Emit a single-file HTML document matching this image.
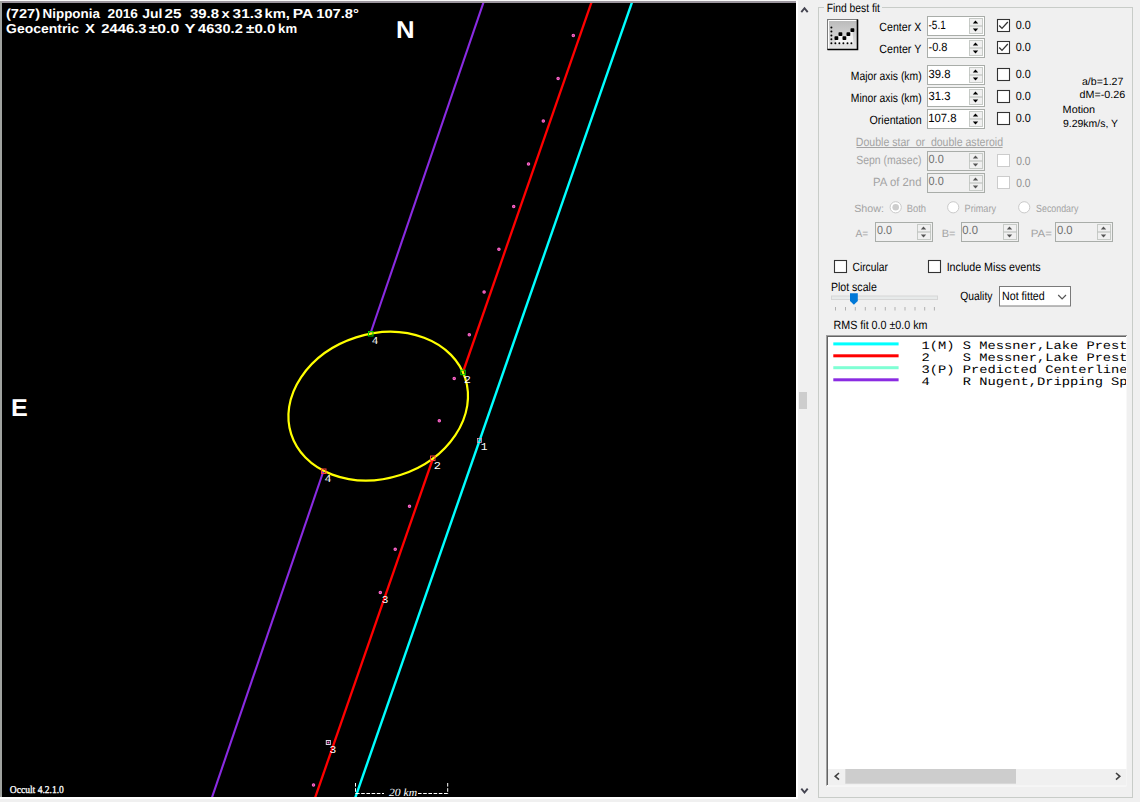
<!DOCTYPE html><html><head><meta charset="utf-8"><style>html,body{margin:0;padding:0}body{width:1140px;height:802px;overflow:hidden;background:#f0f0f0}svg{position:absolute;left:0;top:0;display:block}text{white-space:pre}</style></head><body>
<svg width="1140" height="802" viewBox="0 0 1140 802" text-rendering="geometricPrecision">
<rect x="0" y="0" width="1140" height="802" fill="#f0f0f0"/>
<rect x="0" y="0" width="798" height="1" fill="#f8f8f8"/>
<rect x="0" y="1" width="797" height="2" fill="#9c969e"/>
<rect x="0" y="1" width="2" height="796" fill="#a0a3a0"/>
<rect x="796" y="1" width="2" height="798" fill="#ffffff"/>
<rect x="0" y="797" width="798" height="2" fill="#ffffff"/>
<rect x="2" y="3" width="794" height="794" fill="#000"/>
<defs><clipPath id="cc"><rect x="2" y="3" width="794" height="794"/></clipPath><clipPath id="lc"><rect x="828" y="337" width="298" height="432"/></clipPath><linearGradient id="bg1" x1="0" y1="0" x2="0" y2="1"><stop offset="0" stop-color="#b9b9b9"/><stop offset="1" stop-color="#e6e6e6"/></linearGradient></defs>
<g clip-path="url(#cc)">
<g fill="none">
<line x1="484.32" y1="0" x2="370.26" y2="334" stroke="#8a2be2" stroke-width="2.1"/>
<line x1="323.65" y1="470.5" x2="211.8" y2="798" stroke="#8a2be2" stroke-width="2.1"/>
<line x1="592.3" y1="0" x2="463.1" y2="371.75" stroke="#ff0000" stroke-width="2.3"/>
<line x1="433.2" y1="457.75" x2="315" y2="798" stroke="#ff0000" stroke-width="2.3"/>
<line x1="632.8" y1="0" x2="355.2" y2="798" stroke="#00ffff" stroke-width="2.4"/>
<ellipse cx="378.2" cy="406.2" rx="91.4" ry="72.3" transform="rotate(-17.8 378.2 406.2)" stroke="#ffff00" stroke-width="2.2"/>
<circle cx="573.3" cy="35.5" r="1.2" fill="#b0408f" stroke="#ff66cc" stroke-width="1.1"/>
<circle cx="558.1" cy="78.4" r="1.2" fill="#b0408f" stroke="#ff66cc" stroke-width="1.1"/>
<circle cx="543.3" cy="121.1" r="1.2" fill="#b0408f" stroke="#ff66cc" stroke-width="1.1"/>
<circle cx="528.5" cy="163.9" r="1.2" fill="#b0408f" stroke="#ff66cc" stroke-width="1.1"/>
<circle cx="513.7" cy="206.6" r="1.2" fill="#b0408f" stroke="#ff66cc" stroke-width="1.1"/>
<circle cx="498.9" cy="249.3" r="1.2" fill="#b0408f" stroke="#ff66cc" stroke-width="1.1"/>
<circle cx="484.1" cy="292.1" r="1.2" fill="#b0408f" stroke="#ff66cc" stroke-width="1.1"/>
<circle cx="469.3" cy="334.8" r="1.2" fill="#b0408f" stroke="#ff66cc" stroke-width="1.1"/>
<circle cx="454.2" cy="378.4" r="1.2" fill="#b0408f" stroke="#ff66cc" stroke-width="1.1"/>
<circle cx="439.3" cy="420.8" r="1.2" fill="#b0408f" stroke="#ff66cc" stroke-width="1.1"/>
<circle cx="409.5" cy="506.3" r="1.2" fill="#b0408f" stroke="#ff66cc" stroke-width="1.1"/>
<circle cx="395.2" cy="549.3" r="1.2" fill="#b0408f" stroke="#ff66cc" stroke-width="1.1"/>
<circle cx="380.3" cy="592.4" r="1.2" fill="#b0408f" stroke="#ff66cc" stroke-width="1.1"/>
<circle cx="313.5" cy="785" r="1.2" fill="#b0408f" stroke="#ff66cc" stroke-width="1.1"/>
<rect x="326.3" y="740.5" width="4" height="4" stroke="#d8d8e8" stroke-width="1"/>
<circle cx="328.3" cy="742.5" r="1" fill="#ff66cc"/>
<rect x="368.5" y="331.5" width="4.5" height="4.5" stroke="#00cc00" stroke-width="1"/>
<rect x="460.8" y="370.2" width="4.5" height="4.5" stroke="#00cc00" stroke-width="1"/>
<rect x="430.5" y="456" width="4.5" height="4.5" stroke="#ff4040" stroke-width="1"/>
<rect x="321.5" y="469" width="4.5" height="4.5" stroke="#ff4040" stroke-width="1"/>
<rect x="477.5" y="438.5" width="4" height="4" stroke="#e0a0c0" stroke-width="0.8"/>
</g>
<g stroke="#fff" stroke-width="1" fill="none" stroke-dasharray="3.6 1.6">
<line x1="356" y1="793.5" x2="384" y2="793.5"/><line x1="418" y1="793.5" x2="447.7" y2="793.5"/>
<line x1="355.5" y1="783" x2="355.5" y2="794"/><line x1="447.7" y1="783" x2="447.7" y2="794"/>
</g>
</g>
<text x="5.97" y="17.50" font-family='"Liberation Sans",sans-serif' font-size="13" font-weight="bold" font-style="normal" fill="#ffffff" textLength="34.05" lengthAdjust="spacingAndGlyphs" >(727)</text>
<text x="42.63" y="17.50" font-family='"Liberation Sans",sans-serif' font-size="13" font-weight="bold" font-style="normal" fill="#ffffff" textLength="57.27" lengthAdjust="spacingAndGlyphs" >Nipponia</text>
<text x="107.52" y="17.50" font-family='"Liberation Sans",sans-serif' font-size="13" font-weight="bold" font-style="normal" fill="#ffffff" textLength="30.45" lengthAdjust="spacingAndGlyphs" >2016</text>
<text x="142.19" y="17.50" font-family='"Liberation Sans",sans-serif' font-size="13" font-weight="bold" font-style="normal" fill="#ffffff" textLength="20.19" lengthAdjust="spacingAndGlyphs" >Jul</text>
<text x="164.57" y="17.50" font-family='"Liberation Sans",sans-serif' font-size="13" font-weight="bold" font-style="normal" fill="#ffffff" textLength="16.95" lengthAdjust="spacingAndGlyphs" >25</text>
<text x="189.93" y="17.50" font-family='"Liberation Sans",sans-serif' font-size="13" font-weight="bold" font-style="normal" fill="#ffffff" textLength="29.04" lengthAdjust="spacingAndGlyphs" >39.8</text>
<text x="221.45" y="17.50" font-family='"Liberation Sans",sans-serif' font-size="13" font-weight="bold" font-style="normal" fill="#ffffff" textLength="8.24" lengthAdjust="spacingAndGlyphs" >x</text>
<text x="232.62" y="17.50" font-family='"Liberation Sans",sans-serif' font-size="13" font-weight="bold" font-style="normal" fill="#ffffff" textLength="29.84" lengthAdjust="spacingAndGlyphs" >31.3</text>
<text x="264.47" y="17.50" font-family='"Liberation Sans",sans-serif' font-size="13" font-weight="bold" font-style="normal" fill="#ffffff" textLength="25.44" lengthAdjust="spacingAndGlyphs" >km,</text>
<text x="292.79" y="17.50" font-family='"Liberation Sans",sans-serif' font-size="13" font-weight="bold" font-style="normal" fill="#ffffff" textLength="20.40" lengthAdjust="spacingAndGlyphs" >PA</text>
<text x="316.22" y="17.50" font-family='"Liberation Sans",sans-serif' font-size="13" font-weight="bold" font-style="normal" fill="#ffffff" textLength="42.71" lengthAdjust="spacingAndGlyphs" >107.8°</text>
<text x="6.14" y="33.30" font-family='"Liberation Sans",sans-serif' font-size="13" font-weight="bold" font-style="normal" fill="#ffffff" textLength="72.87" lengthAdjust="spacingAndGlyphs" >Geocentric</text>
<text x="84.95" y="33.30" font-family='"Liberation Sans",sans-serif' font-size="13" font-weight="bold" font-style="normal" fill="#ffffff" textLength="9.93" lengthAdjust="spacingAndGlyphs" >X</text>
<text x="101.28" y="33.30" font-family='"Liberation Sans",sans-serif' font-size="13" font-weight="bold" font-style="normal" fill="#ffffff" textLength="45.22" lengthAdjust="spacingAndGlyphs" >2446.3</text>
<text x="148.71" y="33.30" font-family='"Liberation Sans",sans-serif' font-size="13" font-weight="bold" font-style="normal" fill="#ffffff" textLength="30.51" lengthAdjust="spacingAndGlyphs" >±0.0</text>
<text x="184.47" y="33.30" font-family='"Liberation Sans",sans-serif' font-size="13" font-weight="bold" font-style="normal" fill="#ffffff" textLength="11.01" lengthAdjust="spacingAndGlyphs" >Y</text>
<text x="198.08" y="33.30" font-family='"Liberation Sans",sans-serif' font-size="13" font-weight="bold" font-style="normal" fill="#ffffff" textLength="44.68" lengthAdjust="spacingAndGlyphs" >4630.2</text>
<text x="246.12" y="33.30" font-family='"Liberation Sans",sans-serif' font-size="13" font-weight="bold" font-style="normal" fill="#ffffff" textLength="29.27" lengthAdjust="spacingAndGlyphs" >±0.0</text>
<text x="278.08" y="33.30" font-family='"Liberation Sans",sans-serif' font-size="13" font-weight="bold" font-style="normal" fill="#ffffff" textLength="19.01" lengthAdjust="spacingAndGlyphs" >km</text>
<text x="396.03" y="37.90" font-family='"Liberation Sans",sans-serif' font-size="24.5" font-weight="bold" font-style="normal" fill="#ffffff" textLength="18.61" lengthAdjust="spacingAndGlyphs" >N</text>
<text x="11.07" y="416.00" font-family='"Liberation Sans",sans-serif' font-size="24.5" font-weight="bold" font-style="normal" fill="#ffffff" textLength="16.76" lengthAdjust="spacingAndGlyphs" >E</text>
<text x="9.82" y="792.90" font-family='"Liberation Serif",serif' font-size="10.5" font-weight="normal" font-style="normal" fill="#ffffff" textLength="54.07" lengthAdjust="spacingAndGlyphs" stroke="#fff" stroke-width="0.3">Occult 4.2.1.0</text>
<text x="389.00" y="795.80" font-family='"Liberation Serif",serif' font-size="11" font-weight="normal" font-style="italic" fill="#ffffff" textLength="28.08" lengthAdjust="spacingAndGlyphs" >20 km</text>
<text x="371.65" y="344.00" font-family='"Liberation Mono",monospace' font-size="10.5" font-weight="normal" font-style="normal" fill="#ffffff" textLength="6.60" lengthAdjust="spacingAndGlyphs" >4</text>
<text x="463.66" y="383.00" font-family='"Liberation Mono",monospace' font-size="10.5" font-weight="normal" font-style="normal" fill="#ffffff" textLength="7.17" lengthAdjust="spacingAndGlyphs" >2</text>
<text x="433.76" y="469.00" font-family='"Liberation Mono",monospace' font-size="10.5" font-weight="normal" font-style="normal" fill="#ffffff" textLength="7.17" lengthAdjust="spacingAndGlyphs" >2</text>
<text x="324.62" y="482.00" font-family='"Liberation Mono",monospace' font-size="10.5" font-weight="normal" font-style="normal" fill="#ffffff" textLength="6.96" lengthAdjust="spacingAndGlyphs" >4</text>
<text x="480.81" y="449.90" font-family='"Liberation Mono",monospace' font-size="10.5" font-weight="normal" font-style="normal" fill="#ffffff" textLength="6.75" lengthAdjust="spacingAndGlyphs" >1</text>
<text x="381.68" y="602.80" font-family='"Liberation Mono",monospace' font-size="10.5" font-weight="normal" font-style="normal" fill="#ffffff" textLength="6.64" lengthAdjust="spacingAndGlyphs" >3</text>
<text x="329.57" y="752.80" font-family='"Liberation Mono",monospace' font-size="10.5" font-weight="normal" font-style="normal" fill="#ffffff" textLength="6.77" lengthAdjust="spacingAndGlyphs" >3</text>
<path d="M801.3 12.2 L804.5 8.2 L807.7 12.2" fill="none" stroke="#444450" stroke-width="1.9"/>
<path d="M801.3 788.6 L804.5 792.6 L807.7 788.6" fill="none" stroke="#444450" stroke-width="1.9"/>
<rect x="799" y="392" width="8" height="17" fill="#cdcdcd"/>
<rect x="818.5" y="7.5" width="314" height="790" fill="none" stroke="#c8ccc8"/>
<rect x="824" y="2" width="58" height="10" fill="#f0f0f0"/>
<text x="826.67" y="11.60" font-family='"Liberation Sans",sans-serif' font-size="12" font-weight="normal" font-style="normal" fill="#000" textLength="53.32" lengthAdjust="spacingAndGlyphs" >Find best fit</text>
<rect x="827.5" y="19.5" width="30" height="30" fill="url(#bg1)" stroke="#7a7a7a"/>
<path d="M828.5 49 V20.5 H856.5" fill="none" stroke="#ffffff" stroke-width="1"/>
<path d="M827.5 49.5 H857.5 V19.5" fill="none" stroke="#000" stroke-width="1.6"/>
<polygon points="836.4,38.2 840.4,34.2 844.4,38.2 848.4,34.2 852.4,30.2 853.5,44 835,44" fill="#f4f4f4"/>
<circle cx="831.4" cy="27.4" r="1" fill="#000"/>
<circle cx="831.4" cy="31.4" r="1" fill="#000"/>
<circle cx="831.4" cy="35.4" r="1" fill="#000"/>
<circle cx="831.4" cy="39.2" r="1" fill="#000"/>
<circle cx="831.4" cy="43.3" r="1" fill="#000"/>
<circle cx="835.4" cy="43.3" r="1" fill="#000"/>
<circle cx="839.4" cy="43.3" r="1" fill="#000"/>
<circle cx="843.4" cy="43.3" r="1" fill="#000"/>
<circle cx="847.5" cy="43.3" r="1" fill="#000"/>
<circle cx="851.4" cy="43.3" r="1" fill="#000"/>
<rect x="834.5" y="36.300000000000004" width="3.8" height="3.8" rx="0.8" fill="#000"/>
<rect x="838.5" y="32.300000000000004" width="3.8" height="3.8" rx="0.8" fill="#000"/>
<rect x="842.5" y="36.300000000000004" width="3.8" height="3.8" rx="0.8" fill="#000"/>
<rect x="846.5" y="32.300000000000004" width="3.8" height="3.8" rx="0.8" fill="#000"/>
<rect x="850.5" y="28.3" width="3.8" height="3.8" rx="0.8" fill="#000"/>
<rect x="927.5" y="16.5" width="57" height="19" fill="#ffffff" stroke="#a9ada9" stroke-width="1"/>
<rect x="969.5" y="18.5" width="13" height="15" fill="#f0f0f0" stroke="#c6cac6" stroke-width="1"/>
<rect x="969" y="25.4" width="14" height="1.2" fill="#c0c4c0"/>
<polygon points="972.8,23.40 975.5,20.60 978.2,23.40" fill="#000"/>
<polygon points="972.8,28.60 975.5,31.40 978.2,28.60" fill="#000"/>
<text x="928.55" y="28.70" font-family='"Liberation Sans",sans-serif' font-size="12" font-weight="normal" font-style="normal" fill="#000" textLength="17.13" lengthAdjust="spacingAndGlyphs" >-5.1</text>
<text x="879.37" y="30.80" font-family='"Liberation Sans",sans-serif' font-size="12" font-weight="normal" font-style="normal" fill="#000" textLength="41.86" lengthAdjust="spacingAndGlyphs" >Center X</text>
<rect x="997.5" y="19.5" width="12" height="12" fill="#fff" stroke="#333333" stroke-width="1.1"/>
<path d="M999.2 25.5 L1002 28.4 L1007.8 22" fill="none" stroke="#333333" stroke-width="1.3"/>
<text x="1015.87" y="29.40" font-family='"Liberation Sans",sans-serif' font-size="12" font-weight="normal" font-style="normal" fill="#000" textLength="15.01" lengthAdjust="spacingAndGlyphs" >0.0</text>
<rect x="927.5" y="38.5" width="57" height="19" fill="#ffffff" stroke="#a9ada9" stroke-width="1"/>
<rect x="969.5" y="40.5" width="13" height="15" fill="#f0f0f0" stroke="#c6cac6" stroke-width="1"/>
<rect x="969" y="47.4" width="14" height="1.2" fill="#c0c4c0"/>
<polygon points="972.8,45.40 975.5,42.60 978.2,45.40" fill="#000"/>
<polygon points="972.8,50.60 975.5,53.40 978.2,50.60" fill="#000"/>
<text x="928.50" y="50.70" font-family='"Liberation Sans",sans-serif' font-size="12" font-weight="normal" font-style="normal" fill="#000" textLength="18.97" lengthAdjust="spacingAndGlyphs" >-0.8</text>
<text x="879.37" y="52.80" font-family='"Liberation Sans",sans-serif' font-size="12" font-weight="normal" font-style="normal" fill="#000" textLength="41.88" lengthAdjust="spacingAndGlyphs" >Center Y</text>
<rect x="997.5" y="41.5" width="12" height="12" fill="#fff" stroke="#333333" stroke-width="1.1"/>
<path d="M999.2 47.5 L1002 50.4 L1007.8 44" fill="none" stroke="#333333" stroke-width="1.3"/>
<text x="1015.87" y="51.40" font-family='"Liberation Sans",sans-serif' font-size="12" font-weight="normal" font-style="normal" fill="#000" textLength="15.01" lengthAdjust="spacingAndGlyphs" >0.0</text>
<rect x="927.5" y="65.5" width="57" height="19" fill="#ffffff" stroke="#a9ada9" stroke-width="1"/>
<rect x="969.5" y="67.5" width="13" height="15" fill="#f0f0f0" stroke="#c6cac6" stroke-width="1"/>
<rect x="969" y="74.4" width="14" height="1.2" fill="#c0c4c0"/>
<polygon points="972.8,72.40 975.5,69.60 978.2,72.40" fill="#000"/>
<polygon points="972.8,77.60 975.5,80.40 978.2,77.60" fill="#000"/>
<text x="928.55" y="77.70" font-family='"Liberation Sans",sans-serif' font-size="12" font-weight="normal" font-style="normal" fill="#000" textLength="21.92" lengthAdjust="spacingAndGlyphs" >39.8</text>
<text x="850.77" y="79.80" font-family='"Liberation Sans",sans-serif' font-size="12" font-weight="normal" font-style="normal" fill="#000" textLength="70.89" lengthAdjust="spacingAndGlyphs" >Major axis (km)</text>
<rect x="997.5" y="68.5" width="12" height="12" fill="#fff" stroke="#333333" stroke-width="1.1"/>
<text x="1015.87" y="78.40" font-family='"Liberation Sans",sans-serif' font-size="12" font-weight="normal" font-style="normal" fill="#000" textLength="15.01" lengthAdjust="spacingAndGlyphs" >0.0</text>
<rect x="927.5" y="87.5" width="57" height="19" fill="#ffffff" stroke="#a9ada9" stroke-width="1"/>
<rect x="969.5" y="89.5" width="13" height="15" fill="#f0f0f0" stroke="#c6cac6" stroke-width="1"/>
<rect x="969" y="96.4" width="14" height="1.2" fill="#c0c4c0"/>
<polygon points="972.8,94.40 975.5,91.60 978.2,94.40" fill="#000"/>
<polygon points="972.8,99.60 975.5,102.40 978.2,99.60" fill="#000"/>
<text x="928.55" y="99.70" font-family='"Liberation Sans",sans-serif' font-size="12" font-weight="normal" font-style="normal" fill="#000" textLength="21.92" lengthAdjust="spacingAndGlyphs" >31.3</text>
<text x="850.77" y="101.80" font-family='"Liberation Sans",sans-serif' font-size="12" font-weight="normal" font-style="normal" fill="#000" textLength="70.89" lengthAdjust="spacingAndGlyphs" >Minor axis (km)</text>
<rect x="997.5" y="90.5" width="12" height="12" fill="#fff" stroke="#333333" stroke-width="1.1"/>
<text x="1015.87" y="100.40" font-family='"Liberation Sans",sans-serif' font-size="12" font-weight="normal" font-style="normal" fill="#000" textLength="15.01" lengthAdjust="spacingAndGlyphs" >0.0</text>
<rect x="927.5" y="109.5" width="57" height="19" fill="#ffffff" stroke="#a9ada9" stroke-width="1"/>
<rect x="969.5" y="111.5" width="13" height="15" fill="#f0f0f0" stroke="#c6cac6" stroke-width="1"/>
<rect x="969" y="118.4" width="14" height="1.2" fill="#c0c4c0"/>
<polygon points="972.8,116.40 975.5,113.60 978.2,116.40" fill="#000"/>
<polygon points="972.8,121.60 975.5,124.40 978.2,121.60" fill="#000"/>
<text x="928.15" y="121.70" font-family='"Liberation Sans",sans-serif' font-size="12" font-weight="normal" font-style="normal" fill="#000" textLength="28.33" lengthAdjust="spacingAndGlyphs" >107.8</text>
<text x="869.52" y="123.80" font-family='"Liberation Sans",sans-serif' font-size="12" font-weight="normal" font-style="normal" fill="#000" textLength="52.19" lengthAdjust="spacingAndGlyphs" >Orientation</text>
<rect x="997.5" y="112.5" width="12" height="12" fill="#fff" stroke="#333333" stroke-width="1.1"/>
<text x="1015.87" y="122.40" font-family='"Liberation Sans",sans-serif' font-size="12" font-weight="normal" font-style="normal" fill="#000" textLength="15.01" lengthAdjust="spacingAndGlyphs" >0.0</text>
<text x="1081.98" y="84.70" font-family='"Liberation Sans",sans-serif' font-size="10.5" font-weight="normal" font-style="normal" fill="#000" textLength="41.35" lengthAdjust="spacingAndGlyphs" >a/b=1.27</text>
<text x="1079.57" y="97.70" font-family='"Liberation Sans",sans-serif' font-size="10.5" font-weight="normal" font-style="normal" fill="#000" textLength="45.69" lengthAdjust="spacingAndGlyphs" >dM=-0.26</text>
<text x="1062.63" y="112.70" font-family='"Liberation Sans",sans-serif' font-size="10.5" font-weight="normal" font-style="normal" fill="#000" textLength="32.49" lengthAdjust="spacingAndGlyphs" >Motion</text>
<text x="1063.03" y="126.70" font-family='"Liberation Sans",sans-serif' font-size="10.5" font-weight="normal" font-style="normal" fill="#000" textLength="55.00" lengthAdjust="spacingAndGlyphs" >9.29km/s, Y</text>
<text x="855.86" y="146.00" font-family='"Liberation Sans",sans-serif' font-size="12" font-weight="normal" font-style="normal" fill="#a3a3a3" textLength="147.16" lengthAdjust="spacingAndGlyphs" >Double star  or  double asteroid</text>
<rect x="856.5" y="147" width="146" height="1" fill="#a3a3a3"/>
<rect x="927.5" y="151.5" width="57" height="19" fill="#f0f0f0" stroke="#a9ada9" stroke-width="1"/>
<rect x="969.5" y="153.5" width="13" height="15" fill="#f0f0f0" stroke="#c6cac6" stroke-width="1"/>
<rect x="969" y="160.4" width="14" height="1.2" fill="#c0c4c0"/>
<polygon points="972.8,158.40 975.5,155.60 978.2,158.40" fill="#555555"/>
<polygon points="972.8,163.60 975.5,166.40 978.2,163.60" fill="#555555"/>
<text x="928.57" y="163.40" font-family='"Liberation Sans",sans-serif' font-size="12" font-weight="normal" font-style="normal" fill="#6d6d6d" textLength="15.12" lengthAdjust="spacingAndGlyphs" >0.0</text>
<text x="856.23" y="164.40" font-family='"Liberation Sans",sans-serif' font-size="12" font-weight="normal" font-style="normal" fill="#a3a3a3" textLength="65.15" lengthAdjust="spacingAndGlyphs" >Sepn (masec)</text>
<rect x="997.5" y="154.5" width="12" height="12" fill="#fff" stroke="#cccccc" stroke-width="1"/>
<text x="1016.29" y="164.60" font-family='"Liberation Sans",sans-serif' font-size="12" font-weight="normal" font-style="normal" fill="#8f8f8f" textLength="14.27" lengthAdjust="spacingAndGlyphs" >0.0</text>
<rect x="927.5" y="173.5" width="57" height="19" fill="#f0f0f0" stroke="#a9ada9" stroke-width="1"/>
<rect x="969.5" y="175.5" width="13" height="15" fill="#f0f0f0" stroke="#c6cac6" stroke-width="1"/>
<rect x="969" y="182.4" width="14" height="1.2" fill="#c0c4c0"/>
<polygon points="972.8,180.40 975.5,177.60 978.2,180.40" fill="#555555"/>
<polygon points="972.8,185.60 975.5,188.40 978.2,185.60" fill="#555555"/>
<text x="928.57" y="185.40" font-family='"Liberation Sans",sans-serif' font-size="12" font-weight="normal" font-style="normal" fill="#6d6d6d" textLength="15.12" lengthAdjust="spacingAndGlyphs" >0.0</text>
<text x="873.09" y="186.40" font-family='"Liberation Sans",sans-serif' font-size="12" font-weight="normal" font-style="normal" fill="#a3a3a3" textLength="48.38" lengthAdjust="spacingAndGlyphs" >PA of 2nd</text>
<rect x="997.5" y="176.5" width="12" height="12" fill="#fff" stroke="#cccccc" stroke-width="1"/>
<text x="1016.29" y="186.60" font-family='"Liberation Sans",sans-serif' font-size="12" font-weight="normal" font-style="normal" fill="#8f8f8f" textLength="14.27" lengthAdjust="spacingAndGlyphs" >0.0</text>
<text x="854.22" y="212.20" font-family='"Liberation Sans",sans-serif' font-size="10.5" font-weight="normal" font-style="normal" fill="#a3a3a3" textLength="29.79" lengthAdjust="spacingAndGlyphs" >Show:</text>
<circle cx="895.7" cy="207.3" r="5.6" fill="#fff" stroke="#cacaca" stroke-width="1"/>
<circle cx="895.7" cy="207.3" r="3.3" fill="#cdcdcd"/>
<text x="906.75" y="211.50" font-family='"Liberation Sans",sans-serif' font-size="10.5" font-weight="normal" font-style="normal" fill="#a3a3a3" textLength="19.28" lengthAdjust="spacingAndGlyphs" >Both</text>
<circle cx="953.2" cy="207.3" r="5.6" fill="#fff" stroke="#cacaca" stroke-width="1"/>
<text x="964.57" y="211.50" font-family='"Liberation Sans",sans-serif' font-size="10.5" font-weight="normal" font-style="normal" fill="#a3a3a3" textLength="31.43" lengthAdjust="spacingAndGlyphs" >Primary</text>
<circle cx="1024.2" cy="207.3" r="5.6" fill="#fff" stroke="#cacaca" stroke-width="1"/>
<text x="1036.10" y="211.50" font-family='"Liberation Sans",sans-serif' font-size="10.5" font-weight="normal" font-style="normal" fill="#a3a3a3" textLength="42.21" lengthAdjust="spacingAndGlyphs" >Secondary</text>
<text x="855.40" y="236.80" font-family='"Liberation Sans",sans-serif' font-size="10.5" font-weight="normal" font-style="normal" fill="#a3a3a3" textLength="12.72" lengthAdjust="spacingAndGlyphs" >A=</text>
<rect x="875.5" y="222.5" width="57" height="19" fill="#f0f0f0" stroke="#a9ada9" stroke-width="1"/>
<rect x="917.5" y="224.5" width="13" height="15" fill="#f0f0f0" stroke="#c6cac6" stroke-width="1"/>
<rect x="917" y="231.4" width="14" height="1.2" fill="#c0c4c0"/>
<polygon points="920.8,229.40 923.5,226.60 926.2,229.40" fill="#555555"/>
<polygon points="920.8,234.60 923.5,237.40 926.2,234.60" fill="#555555"/>
<text x="877.07" y="234.30" font-family='"Liberation Sans",sans-serif' font-size="12" font-weight="normal" font-style="normal" fill="#6d6d6d" textLength="14.91" lengthAdjust="spacingAndGlyphs" >0.0</text>
<text x="941.72" y="236.80" font-family='"Liberation Sans",sans-serif' font-size="10.5" font-weight="normal" font-style="normal" fill="#a3a3a3" textLength="13.74" lengthAdjust="spacingAndGlyphs" >B=</text>
<rect x="961.5" y="222.5" width="57" height="19" fill="#f0f0f0" stroke="#a9ada9" stroke-width="1"/>
<rect x="1003.5" y="224.5" width="13" height="15" fill="#f0f0f0" stroke="#c6cac6" stroke-width="1"/>
<rect x="1003" y="231.4" width="14" height="1.2" fill="#c0c4c0"/>
<polygon points="1006.8,229.40 1009.5,226.60 1012.2,229.40" fill="#555555"/>
<polygon points="1006.8,234.60 1009.5,237.40 1012.2,234.60" fill="#555555"/>
<text x="962.35" y="234.30" font-family='"Liberation Sans",sans-serif' font-size="12" font-weight="normal" font-style="normal" fill="#6d6d6d" textLength="15.65" lengthAdjust="spacingAndGlyphs" >0.0</text>
<text x="1030.68" y="236.80" font-family='"Liberation Sans",sans-serif' font-size="10.5" font-weight="normal" font-style="normal" fill="#a3a3a3" textLength="21.18" lengthAdjust="spacingAndGlyphs" >PA=</text>
<rect x="1055.5" y="222.5" width="57" height="19" fill="#f0f0f0" stroke="#a9ada9" stroke-width="1"/>
<rect x="1097.5" y="224.5" width="13" height="15" fill="#f0f0f0" stroke="#c6cac6" stroke-width="1"/>
<rect x="1097" y="231.4" width="14" height="1.2" fill="#c0c4c0"/>
<polygon points="1100.8,229.40 1103.5,226.60 1106.2,229.40" fill="#555555"/>
<polygon points="1100.8,234.60 1103.5,237.40 1106.2,234.60" fill="#555555"/>
<text x="1056.95" y="234.30" font-family='"Liberation Sans",sans-serif' font-size="12" font-weight="normal" font-style="normal" fill="#6d6d6d" textLength="15.65" lengthAdjust="spacingAndGlyphs" >0.0</text>
<rect x="834.5" y="260.5" width="12" height="12" fill="#fff" stroke="#333333" stroke-width="1.1"/>
<text x="852.49" y="271.00" font-family='"Liberation Sans",sans-serif' font-size="12" font-weight="normal" font-style="normal" fill="#000" textLength="35.32" lengthAdjust="spacingAndGlyphs" >Circular</text>
<rect x="928.5" y="260.5" width="12" height="12" fill="#fff" stroke="#333333" stroke-width="1.1"/>
<text x="946.64" y="271.00" font-family='"Liberation Sans",sans-serif' font-size="12" font-weight="normal" font-style="normal" fill="#000" textLength="93.96" lengthAdjust="spacingAndGlyphs" >Include Miss events</text>
<text x="830.95" y="290.50" font-family='"Liberation Sans",sans-serif' font-size="12" font-weight="normal" font-style="normal" fill="#000" textLength="45.83" lengthAdjust="spacingAndGlyphs" >Plot scale</text>
<rect x="831.5" y="296" width="106" height="3.5" fill="#e7eaea" stroke="#d6d6d6" stroke-width="1"/>
<path d="M850 293.2 H857.8 V301 L853.9 304.7 L850 301 Z" fill="#0078d7"/>
<rect x="835.0" y="307" width="1" height="3.5" fill="#b0b0b0"/>
<rect x="845.0" y="307" width="1" height="3.5" fill="#b0b0b0"/>
<rect x="854.8" y="307" width="1" height="3.5" fill="#b0b0b0"/>
<rect x="864.8" y="307" width="1" height="3.5" fill="#b0b0b0"/>
<rect x="874.8" y="307" width="1" height="3.5" fill="#b0b0b0"/>
<rect x="884.8" y="307" width="1" height="3.5" fill="#b0b0b0"/>
<rect x="894.5" y="307" width="1" height="3.5" fill="#b0b0b0"/>
<rect x="904.5" y="307" width="1" height="3.5" fill="#b0b0b0"/>
<rect x="914.5" y="307" width="1" height="3.5" fill="#b0b0b0"/>
<rect x="924.2" y="307" width="1" height="3.5" fill="#b0b0b0"/>
<rect x="933.9" y="307" width="1" height="3.5" fill="#b0b0b0"/>
<text x="960.34" y="300.00" font-family='"Liberation Sans",sans-serif' font-size="12" font-weight="normal" font-style="normal" fill="#000" textLength="32.09" lengthAdjust="spacingAndGlyphs" >Quality</text>
<rect x="999.5" y="286.5" width="71" height="19.5" fill="#fff" stroke="#7a7a7a"/>
<text x="1002.05" y="299.50" font-family='"Liberation Sans",sans-serif' font-size="12" font-weight="normal" font-style="normal" fill="#000" textLength="42.67" lengthAdjust="spacingAndGlyphs" >Not fitted</text>
<path d="M1058.2 295 L1062.1 299 L1066 295" fill="none" stroke="#555" stroke-width="1.2"/>
<text x="833.54" y="329.40" font-family='"Liberation Sans",sans-serif' font-size="12" font-weight="normal" font-style="normal" fill="#000" textLength="93.94" lengthAdjust="spacingAndGlyphs" >RMS fit 0.0 ±0.0 km</text>
<rect x="826" y="335" width="300.5" height="450.6" fill="#ffffff"/>
<rect x="826" y="335" width="1" height="451" fill="#a0a0a0"/>
<rect x="826" y="335" width="301" height="1" fill="#a0a0a0"/>
<rect x="827" y="336" width="1" height="449" fill="#646464"/>
<rect x="827" y="336" width="299" height="1" fill="#646464"/>
<rect x="826.4" y="785.4" width="300" height="1" fill="#ffffff"/>
<rect x="828" y="769" width="298.5" height="16.6" fill="#f0f0f0"/>
<rect x="845.3" y="769" width="170.7" height="14.7" fill="#cdcdcd"/>
<path d="M839 787.5 M839 773 L835.2 776.3 L839 779.6" fill="none" stroke="#404040" stroke-width="1.6"/>
<path d="M1116 773 L1119.8 776.3 L1116 779.6" fill="none" stroke="#404040" stroke-width="1.6"/>
<rect x="833.3" y="342.4" width="65.3" height="3" fill="#00ffff"/>
<rect x="833.3" y="354.3" width="65.3" height="3" fill="#ff0000"/>
<rect x="833.3" y="366.2" width="65.3" height="3" fill="#7fffd4"/>
<rect x="833.3" y="378.3" width="65.3" height="3" fill="#8a2be2"/>
<g clip-path="url(#lc)">
<text x="921.6" y="348.60" font-family='"Liberation Mono",monospace' font-size="11.5" fill="#000" textLength="255.44" lengthAdjust="spacingAndGlyphs">1(M) S Messner,Lake Preston, SD</text>
<text x="921.6" y="360.60" font-family='"Liberation Mono",monospace' font-size="11.5" fill="#000" textLength="255.44" lengthAdjust="spacingAndGlyphs">2    S Messner,Lake Preston, SD</text>
<text x="921.6" y="372.60" font-family='"Liberation Mono",monospace' font-size="11.5" fill="#000" textLength="206.00" lengthAdjust="spacingAndGlyphs">3(P) Predicted Centerline</text>
<text x="921.6" y="384.60" font-family='"Liberation Mono",monospace' font-size="11.5" fill="#000" textLength="280.16" lengthAdjust="spacingAndGlyphs">4    R Nugent,Dripping Springs, TX</text>
</g>
</svg></body></html>
